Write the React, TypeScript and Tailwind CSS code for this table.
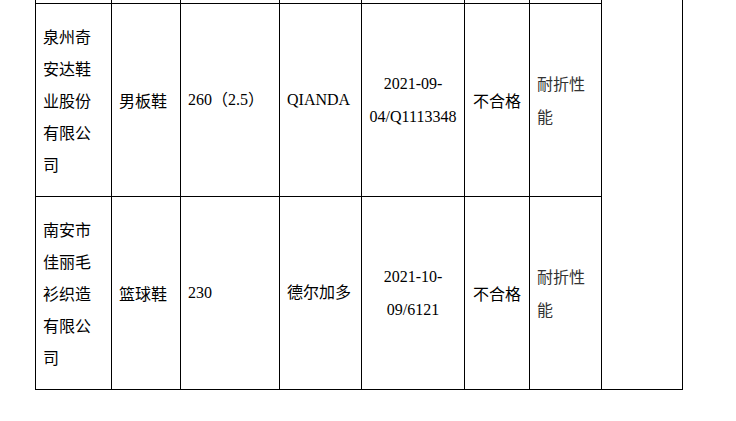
const rows = [
  {
    company: "泉州奇安达鞋业股份有限公司",
    product: "男板鞋",
    spec: "260（2.5）",
    brand: "QIANDA",
    date: ["2021-09-", "04/Q1113348"],
    result: "不合格",
    item: "耐折性能",
  },
  {
    company: "南安市佳丽毛衫织造有限公司",
    product: "篮球鞋",
    spec: "230",
    brand: "德尔加多",
    date: ["2021-10-", "09/6121"],
    result: "不合格",
    item: "耐折性能",
  },
];

const cell = "border border-black px-[7px] align-middle";

export default function App() {
  return (
    <div className="h-[421px] w-[736px] overflow-hidden bg-white pl-[35px] text-[16px] text-black [font-family:'Liberation_Serif','Noto_Sans_CJK_SC',serif]">
      <table className="w-[647px] table-fixed border-collapse">
        <colgroup>
          <col className="w-[76px]" />
          <col className="w-[69px]" />
          <col className="w-[99px]" />
          <col className="w-[82px]" />
          <col className="w-[103px]" />
          <col className="w-[65px]" />
          <col className="w-[72px]" />
          <col className="w-[81px]" />
        </colgroup>
        <tbody>
          <tr className="h-[3px]">
            {Array.from({ length: 7 }).map((_, i) => (
              <td key={i} className="border border-t-0 border-black p-0" />
            ))}
            <td rowSpan={3} className="border border-t-0 border-black p-0" />
          </tr>
          {rows.map((r) => (
            <tr key={r.company} className="h-[193px]">
              <td className={`${cell} leading-[32px] [font-family:'Noto_Sans_CJK_SC',sans-serif]`}>
                {r.company}
              </td>
              <td className={`${cell} leading-[32px] [font-family:'Noto_Sans_CJK_SC',sans-serif]`}>
                {r.product}
              </td>
              <td className={`${cell} leading-[32px]`}>{r.spec}</td>
              <td className={`${cell} leading-[32px]`}>{r.brand}</td>
              <td className={`${cell} text-center leading-[33px]`}>
                {r.date[0]}
                <br />
                {r.date[1]}
              </td>
              <td className={`${cell} text-center leading-[32px] [font-family:'Noto_Sans_CJK_SC',sans-serif]`}>
                {r.result}
              </td>
              <td className={`${cell} leading-[33px] text-[#333] [font-family:'Noto_Sans_CJK_SC',sans-serif]`}>
                {r.item}
              </td>
            </tr>
          ))}
        </tbody>
      </table>
    </div>
  );
}
